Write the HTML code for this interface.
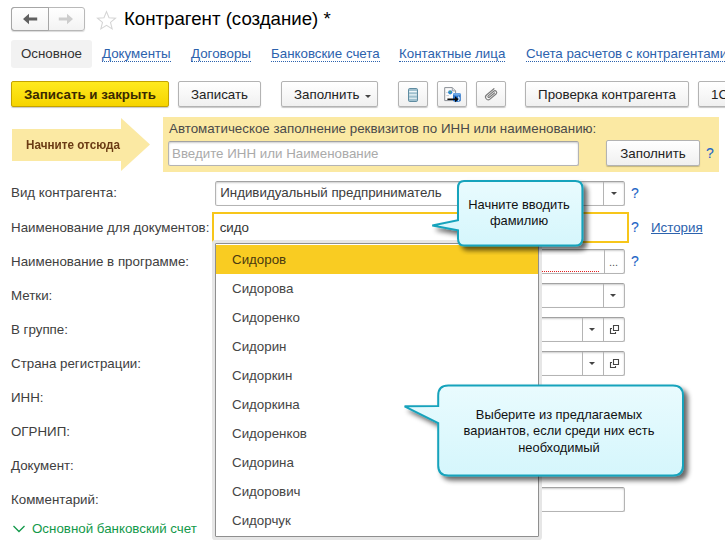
<!DOCTYPE html>
<html lang="ru"><head><meta charset="utf-8">
<style>
*{box-sizing:border-box;margin:0;padding:0}
html,body{width:725px;height:542px;overflow:hidden;background:#fff}
body{position:relative;font-family:"Liberation Sans",sans-serif;font-size:13.33px;color:#333}
.a{position:absolute;white-space:nowrap}
.btn{position:absolute;height:26px;border:1px solid #b3b3b3;border-radius:2px;background:linear-gradient(#ffffff,#f0f0f0);box-shadow:0 1px 1px rgba(0,0,0,.22);font-size:13.33px;color:#222;text-align:center;line-height:25px;white-space:nowrap}
.lnk{position:absolute;top:46px;font-size:13.33px;color:#2c62ad;white-space:nowrap;border-bottom:1px dotted #2c62ad;line-height:15px;height:16px}
.lbl{position:absolute;left:11px;font-size:13.33px;color:#404040;white-space:nowrap;line-height:16px}
.inp{position:absolute;height:25px;border:1px solid #b4b4b4;border-top-color:#a2a2a2;border-radius:2.5px;background:#fff;box-shadow:inset 0 1px 2px rgba(0,0,0,.2)}
.q{position:absolute;margin-top:-1px;font-size:14px;color:#1f66c6;line-height:16px;-webkit-text-stroke:.12px #1f66c6}
.it{position:absolute;left:0;width:322px;height:29px;line-height:30px;padding-left:16px;font-size:13.33px;color:#454545}
.vd{position:absolute;width:1px;height:23px;background:#b4b4b4}
.tri{position:absolute;width:0;height:0;border-left:3px solid transparent;border-right:3px solid transparent;border-top:3.5px solid #444}
</style></head><body>

<!-- nav buttons -->
<div class="a" style="left:11px;top:7px;width:74px;height:24px;border:1px solid #b9b9b9;border-radius:3px;background:linear-gradient(#fff,#f3f3f3);box-shadow:0 1px 1px rgba(0,0,0,.15)"></div>
<div class="a" style="left:11px;top:7px;width:38px;height:24px;border:1px solid #a6a6a6;border-radius:3px 0 0 3px"></div>
<svg class="a" style="left:22px;top:13px" width="16" height="12" viewBox="0 0 16 12"><path d="M1 6 L7 0.8 L7 4.6 L15.2 4.6 L15.2 7.4 L7 7.4 L7 11.2 Z" fill="#606060"/></svg>
<svg class="a" style="left:58px;top:13px" width="16" height="12" viewBox="0 0 16 12"><path d="M15 6 L9 0.8 L9 4.6 L0.8 4.6 L0.8 7.4 L9 7.4 L9 11.2 Z" fill="#cdcdcd"/></svg>
<svg class="a" style="left:95.5px;top:9.6px" width="21" height="21" viewBox="0 0 20 20"><path d="M10 1.5 L12.4 7.4 L18.6 7.8 L13.8 11.8 L15.4 18 L10 14.6 L4.6 18 L6.2 11.8 L1.4 7.8 L7.6 7.4 Z" fill="none" stroke="#d4d4d4" stroke-width="1"/></svg>
<div class="a" style="left:124px;top:6px;font-size:18.67px;color:#000;line-height:26px">Контрагент (создание) *</div>

<!-- tabs -->
<div class="a" style="left:11px;top:40px;width:81px;height:28px;background:#f2f2f2;border-radius:3px;font-size:13.33px;color:#333;line-height:27px;text-align:center">Основное</div>
<div class="lnk" style="left:102px">Документы</div>
<div class="lnk" style="left:191px">Договоры</div>
<div class="lnk" style="left:271px">Банковские счета</div>
<div class="lnk" style="left:399px">Контактные лица</div>
<div class="lnk" style="left:526px">Счета расчетов с контрагентами</div>

<!-- toolbar -->
<div class="btn" style="left:11px;top:81px;width:158px;background:linear-gradient(#ffea1f,#f6d400);border-color:#c4a300;font-weight:bold;color:#3a2a00">Записать и закрыть</div>
<div class="btn" style="left:178px;top:81px;width:83px">Записать</div>
<div class="btn" style="left:281px;top:81px;width:97px;text-align:left;padding-left:12px">Заполнить</div>
<div class="tri" style="left:365px;top:95px;border-top-width:3px"></div>
<div class="btn" style="left:398px;top:81px;width:30px"></div>
<div class="btn" style="left:437px;top:81px;width:30px"></div>
<div class="btn" style="left:476px;top:81px;width:30px"></div>
<!-- icon: list -->
<svg class="a" style="left:405px;top:86px" width="16" height="18" viewBox="0 0 16 18">
<rect x="3.5" y="2.5" width="9" height="13" rx="1.2" fill="#9fc0ce" stroke="#5f8ca1" stroke-width="1"/>
<path d="M4.2 5.6 H11.8 M4.2 8.9 H11.8 M4.2 12.2 H11.8" stroke="#f0f7fa" stroke-width="1.1"/>
</svg>
<!-- icon: doc export -->
<svg class="a" style="left:443px;top:86px" width="19" height="18" viewBox="0 0 19 18">
<path d="M1.7 1.6 H9.3 L12.6 4.9 V14.6 H1.7 Z" fill="#fbfbfb" stroke="#8a8f96" stroke-width="1"/>
<path d="M9.3 1.6 V4.9 H12.6" fill="#dde1e6" stroke="#8a8f96" stroke-width=".8"/>
<circle cx="7.2" cy="6.3" r="2.1" fill="#2f86d6"/><path d="M6.2 5.2 q1.3 -.8 2 .4 q-.2 1.2 -1.3 1 z" fill="#59b648"/>
<path d="M3.3 6.5 H4.6 M3.3 9.6 H6" stroke="#b5bac1" stroke-width=".8"/>
<path d="M10 8.3 q0 -1.4 3.9 -1.4 q3.9 0 3.9 1.4 V14.6 q0 1.4 -3.9 1.4 q-3.9 0 -3.9 -1.4 Z" fill="#2b73c7"/>
<ellipse cx="13.9" cy="8.3" rx="3.9" ry="1.4" fill="#6aa6e6"/>
<path d="M15.2 10.6 q2 1.6 0 4.2" fill="none" stroke="#e8f2fc" stroke-width="1.1"/>
<path d="M4.4 12.4 H12 V10.2 L15.6 13.2 L12 16.2 V14 H4.4 Z" fill="#0a0a0a"/>
</svg>
<!-- icon: paperclip -->
<svg class="a" style="left:482px;top:85px" width="18" height="19" viewBox="0 0 18 19">
<g transform="translate(9 9.7) rotate(-40) scale(.9)" fill="none" stroke="#7a7a7a" stroke-width="1.25" stroke-linecap="round">
<path d="M6.8 -3 L-4 -3 A3 3 0 0 0 -4 3 L4.8 3 A2 2 0 0 0 4.8 -1 L-3.2 -1 A1 1 0 0 0 -3.2 1 L4.2 1"/>
</g></svg>
<div class="btn" style="left:525px;top:81px;width:164px">Проверка контрагента</div>
<div class="btn" style="left:698px;top:81px;width:60px;text-align:left;padding-left:12px">1С</div>

<!-- yellow panel -->
<div class="a" style="left:163px;top:117px;width:556px;height:55px;background:#fbe9a3"></div>
<svg class="a" style="left:12px;top:118px" width="138" height="53" viewBox="0 0 138 53"><path d="M0 11 L109 11 L109 0 L138 26.5 L109 53 L109 43 L0 43 Z" fill="#fbe9a3"/></svg>
<div class="a" style="left:25.8px;top:137px;font-size:13.3px;font-weight:bold;color:#6b3c14;line-height:15px;transform:scaleX(.88);transform-origin:0 0">Начните отсюда</div>
<div class="a" style="left:169px;top:121px;font-size:13.33px;color:#4a4a4a;line-height:16px">Автоматическое заполнение реквизитов по ИНН или наименованию:</div>
<div class="inp" style="left:168px;top:141px;width:411px"></div>
<div class="a" style="left:172px;top:146px;font-size:13.33px;color:#aaa;line-height:16px">Введите ИНН или Наименование</div>
<div class="btn" style="left:606px;top:140px;width:94px">Заполнить</div>
<div class="q" style="left:706px;top:146px">?</div>

<!-- labels -->
<div class="lbl" style="top:185px">Вид контрагента:</div>
<div class="lbl" style="top:220px">Наименование для документов:</div>
<div class="lbl" style="top:254px">Наименование в программе:</div>
<div class="lbl" style="top:288px">Метки:</div>
<div class="lbl" style="top:322px">В группе:</div>
<div class="lbl" style="top:356px">Страна регистрации:</div>
<div class="lbl" style="top:390px">ИНН:</div>
<div class="lbl" style="top:424px">ОГРНИП:</div>
<div class="lbl" style="top:458px">Документ:</div>
<div class="lbl" style="top:492px">Комментарий:</div>
<svg class="a" style="left:12px;top:524px" width="14" height="10" viewBox="0 0 14 10"><path d="M1.5 2 L7 7.5 L12.5 2" fill="none" stroke="#12994a" stroke-width="1.3"/></svg>
<div class="a" style="left:32px;top:521px;font-size:13.33px;color:#12994a;line-height:16px">Основной банковский счет</div>

<!-- row 1: select -->
<div class="inp" style="left:215px;top:181px;width:410px"></div>
<div class="vd" style="left:603px;top:182px"></div>
<div class="tri" style="left:610.5px;top:192px"></div>
<div class="a" style="left:220.2px;top:185px;font-size:13.33px;color:#3c3c3c;line-height:16px">Индивидуальный предприниматель</div>
<div class="q" style="left:631px;top:186px">?</div>

<!-- row 2: active input -->
<div class="a" style="left:212px;top:212px;width:417px;height:31px;border:2px solid #f7c61a;background:#fff;border-radius:0"></div>
<div class="a" style="left:219.7px;top:220px;font-size:13.33px;color:#333;line-height:16px">сидо</div>
<div class="q" style="left:631px;top:220px">?</div>
<div class="a" style="left:651px;top:220px;font-size:13.33px;color:#2c62ad;text-decoration:underline;line-height:16px">История</div>

<!-- right-side fields behind the dropdown -->
<div class="inp" style="left:530px;top:249px;width:95px"></div>
<div class="vd" style="left:604px;top:250px"></div>
<div class="a" style="left:609px;top:255px;font-size:11px;color:#555;line-height:14px">...</div>
<div class="a" style="left:541px;top:271px;width:58px;height:0;border-top:1px dotted #e02020"></div>
<div class="q" style="left:631px;top:254px">?</div>

<div class="inp" style="left:530px;top:283px;width:95px"></div>
<div class="vd" style="left:603px;top:284px"></div>
<div class="tri" style="left:610.2px;top:294px"></div>

<div class="inp" style="left:530px;top:317px;width:95px"></div>
<div class="vd" style="left:582px;top:318px"></div>
<div class="vd" style="left:603px;top:318px"></div>
<div class="tri" style="left:589.2px;top:328px"></div>
<svg class="a" style="left:609px;top:324px" width="11" height="11" viewBox="0 0 11 11"><path d="M4.5 1.5 H9.5 V6.5 H4.5 Z M3 4.5 H1.5 V9.5 H6.5 V8" fill="none" stroke="#444" stroke-width="1.1"/></svg>

<div class="inp" style="left:530px;top:351px;width:95px"></div>
<div class="vd" style="left:582px;top:352px"></div>
<div class="vd" style="left:603px;top:352px"></div>
<div class="tri" style="left:589.2px;top:362px"></div>
<svg class="a" style="left:609px;top:358px" width="11" height="11" viewBox="0 0 11 11"><path d="M4.5 1.5 H9.5 V6.5 H4.5 Z M3 4.5 H1.5 V9.5 H6.5 V8" fill="none" stroke="#444" stroke-width="1.1"/></svg>

<div class="inp" style="left:530px;top:487px;width:95px"></div>

<!-- dropdown -->
<div class="a" style="left:215px;top:243px;width:324px;height:294px;background:#fff;border:1px solid #8f8f8f;box-shadow:0 0 0 3px #e6e6e6;border-radius:1px">
<div class="it" style="top:1px;background:#f9cc22;color:#4a3a10">Сидоров</div>
<div class="it" style="top:30px">Сидорова</div>
<div class="it" style="top:59px">Сидоренко</div>
<div class="it" style="top:88px">Сидорин</div>
<div class="it" style="top:117px">Сидоркин</div>
<div class="it" style="top:146px">Сидоркина</div>
<div class="it" style="top:175px">Сидоренков</div>
<div class="it" style="top:204px">Сидорина</div>
<div class="it" style="top:233px">Сидорович</div>
<div class="it" style="top:262px">Сидорчук</div>
</div>

<!-- callout 1 -->
<svg class="a" style="left:425px;top:175px" width="170" height="80" viewBox="0 0 170 80">
<defs><linearGradient id="g1" x1="0" y1="0" x2="0" y2="1"><stop offset="0" stop-color="#e9fbfe"/><stop offset="1" stop-color="#d5f6fc"/></linearGradient>
<filter id="sh" x="-10%" y="-10%" width="130%" height="150%"><feGaussianBlur in="SourceAlpha" stdDeviation="2.6"/><feOffset dx="4" dy="3.5"/><feComponentTransfer><feFuncA type="linear" slope="0.6"/></feComponentTransfer><feMerge><feMergeNode/><feMergeNode in="SourceGraphic"/></feMerge></filter></defs>
<path filter="url(#sh)" d="M39 6 H150.4 Q157.4 6 157.4 13 V63.5 Q157.4 70.5 150.4 70.5 H39 Q33 70.5 33 63.5 V55.3 L7.3 50.4 L33 45.2 V13 Q33 6 39 6 Z" fill="url(#g1)" stroke="#17a3bc" stroke-width="2"/>
</svg>
<div class="a" style="left:456px;top:197px;width:126px;text-align:center;font-size:12.9px;color:#111;line-height:16px;white-space:normal">Начните вводить фамилию</div>

<!-- callout 2 -->
<svg class="a" style="left:395px;top:380px" width="300" height="108" viewBox="0 0 300 108">
<path filter="url(#sh)" d="M53.2 5.5 H278 Q288 5.5 288 15.5 V85.5 Q288 95.5 278 95.5 H53.2 Q43.2 95.5 43.2 85.5 V43 L9.6 26.3 L43.2 26 V15.5 Q43.2 5.5 53.2 5.5 Z" fill="url(#g1)" stroke="#17a3bc" stroke-width="2"/>
</svg>
<div class="a" style="left:449px;top:407px;width:220px;text-align:center;font-size:12.9px;color:#111;line-height:16.4px;white-space:normal">Выберите из предлагаемых вариантов, если среди них есть необходимый</div>

</body></html>
